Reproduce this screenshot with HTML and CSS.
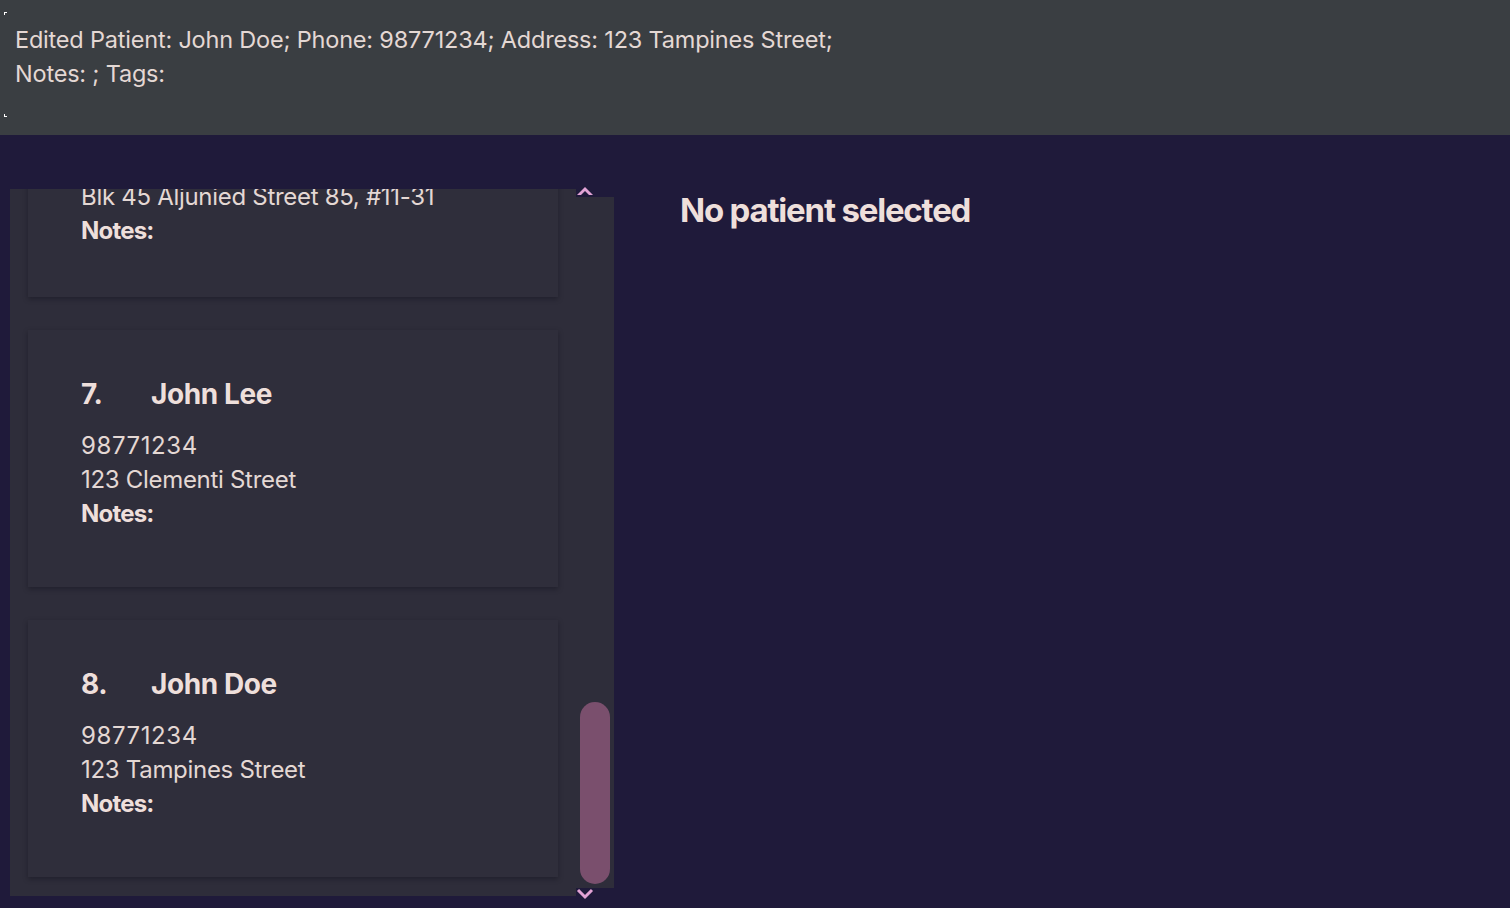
FILE: index.html
```html
<!DOCTYPE html>
<html lang="en">
<head>
<meta charset="utf-8">
<title>Patients</title>
<link rel="stylesheet" href="styles.css">
</head>
<body>
  <div class="result">
    <span class="mark mark-top"></span>
    <p class="result-line">Edited Patient: John Doe; Phone: 98771234; Address: 123 Tampines Street;</p>
    <p class="result-line">Notes: ; Tags:</p>
    <span class="mark mark-bottom"></span>
  </div>
  <div class="main">
    <div class="list-panel">
      <div class="viewport">
        <div class="list">
          <div class="card card-first">
            <div class="name-row"><span class="index">6.</span><span class="name">Roy Balakrishnan</span></div>
            <div class="line phone">92624417</div>
            <div class="line">Blk 45 Aljunied Street 85, #11-31</div>
            <div class="line notes">Notes:</div>
          </div>
          <div class="card">
            <div class="name-row"><span class="index">7.</span><span class="name">John Lee</span></div>
            <div class="line phone">98771234</div>
            <div class="line">123 Clementi Street</div>
            <div class="line notes">Notes:</div>
          </div>
          <div class="card">
            <div class="name-row"><span class="index">8.</span><span class="name">John Doe</span></div>
            <div class="line phone">98771234</div>
            <div class="line">123 Tampines Street</div>
            <div class="line notes">Notes:</div>
          </div>
        </div>
      </div>
      <div class="scrollbar">
        <div class="arrow arrow-up">
          <svg width="20" height="12" viewBox="0 0 20 12"><polygon points="2,10 10,2 18,10 14,10 10,6 6,10" fill="#e2a3d5"/></svg>
        </div>
        <div class="track">
          <div class="thumb"></div>
        </div>
        <div class="arrow arrow-down">
          <svg width="20" height="12" viewBox="0 0 20 12"><polyline points="3,2 10,9 17,2" fill="none" stroke="#e2a3d5" stroke-width="3" stroke-linejoin="miter"/></svg>
        </div>
      </div>
    </div>
    <div class="detail">
      <h1 class="empty-title">No patient selected</h1>
    </div>
  </div>
</body>
</html>
```

FILE: styles.css
```css
* { box-sizing: border-box; }

html, body {
  margin: 0;
  padding: 0;
  height: 100%;
}

body {
  background: #1f1a3a;
  font-family: Inter, "Noto Sans", "Liberation Sans", sans-serif;
  color: #ecdcd7;
  overflow: hidden;
}

.result {
  position: relative;
  height: 135px;
  background: #3a3e42;
  padding: 23px 15px 0;
}

.result-line {
  margin: 0;
  font-size: 23.5px;
  line-height: 34px;
  color: #e4d8d4;
  letter-spacing: -0.2px;
}

.mark {
  position: absolute;
  left: 4px;
  width: 3px;
  height: 3px;
  border-color: #ffffff;
  border-style: solid;
}

.mark-top {
  top: 12px;
  border-width: 1px 0 0 1px;
}

.mark-bottom {
  top: 114px;
  border-width: 0 0 1px 1px;
}

.main {
  display: flex;
  padding-top: 54px;
}

.list-panel {
  display: flex;
  margin-left: 10px;
  width: 604px;
}

.viewport {
  width: 566px;
  height: 707px;
  background: #2e2d3a;
  overflow: hidden;
  padding-left: 18px;
}

.list {
  margin-top: -142px;
  display: flex;
  flex-direction: column;
  gap: 33px;
}

.card {
  width: 530px;
  height: 257px;
  background: #2f2e3b;
  box-shadow: 0 2px 5px rgba(10, 8, 20, 0.35);
  padding: 47px 0 0 53px;
}

.card-first {
  height: 250px;
}

.name-row {
  display: flex;
  font-size: 28px;
  font-weight: 700;
  line-height: 34px;
  letter-spacing: -0.4px;
  margin-bottom: 18px;
  color: #eedfdb;
}

.index {
  width: 70px;
}

.line {
  font-size: 24px;
  line-height: 34px;
  color: #e4d8d4;
  letter-spacing: -0.3px;
}

.phone {
  letter-spacing: 0.6px;
}

.notes {
  font-weight: 700;
  letter-spacing: -0.8px;
  color: #eedfdb;
}

.scrollbar {
  width: 38px;
  display: flex;
  flex-direction: column;
  height: 711px;
}

.arrow {
  height: 8px;
  display: flex;
  justify-content: flex-start;
}

.arrow svg {
  display: block;
  overflow: visible;
  margin-left: -1px;
}

.arrow-up svg {
  margin-top: -4px;
}

.arrow-down {
  height: 12px;
}

.track {
  flex: 1;
  background: #2e2d3a;
  display: flex;
  flex-direction: column;
  justify-content: flex-end;
  padding: 0 4px 4px;
}

.thumb {
  height: 182px;
  width: 30px;
  border-radius: 15px;
  background: #7a4f6d;
}

.detail {
  padding-left: 66px;
  padding-top: 1px;
}

.empty-title {
  margin: 0;
  font-size: 33px;
  font-weight: 700;
  line-height: 40px;
  letter-spacing: -1.2px;
  color: #eedfdb;
}
```
